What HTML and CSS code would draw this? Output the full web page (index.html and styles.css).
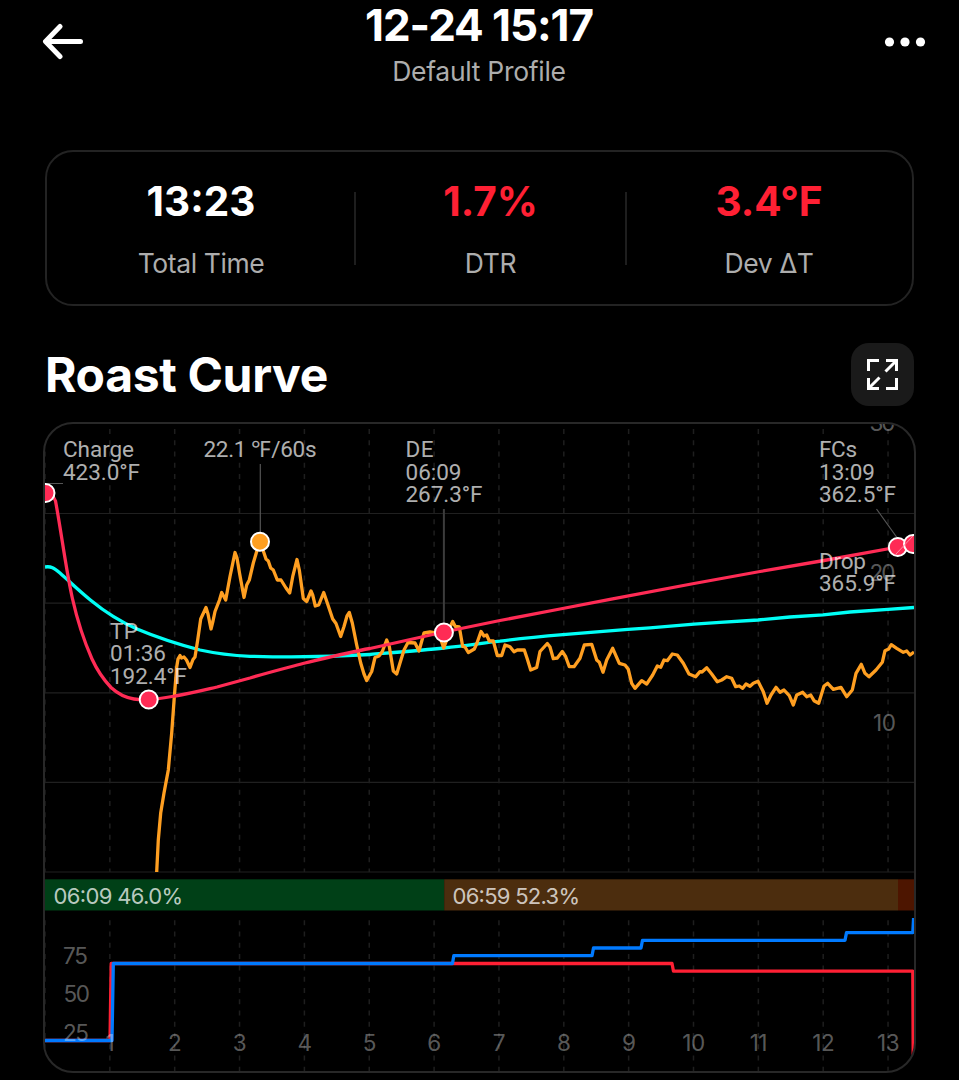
FILE: index.html
```html
<!DOCTYPE html>
<html lang="en">
<head>
  <meta charset="UTF-8">
  <title>Roast Detail</title>
  <meta name="viewport" content="width=device-width, initial-scale=1.0">
  <link rel="stylesheet" href="styles.css">
</head>
<body>

  <header class="top-bar">
    <a class="back" href="#" title="Back">
      <svg width="42" height="38" viewBox="0 0 42 38">
        <path d="M18 4.500 L3.500 19.500 L18 34.500 M4 19.500 H38.500"/>
      </svg>
    </a>
    <div class="heading">
      <h1>12-24 15:17</h1>
      <p>Default Profile</p>
    </div>
    <a class="more" href="#" title="More">
      <svg width="42" height="12" viewBox="0 0 42 12">
        <circle cx="5.500" cy="6" r="4.600"/>
        <circle cx="21" cy="6" r="4.600"/>
        <circle cx="36.500" cy="6" r="4.600"/>
      </svg>
    </a>
  </header>

  <section class="stats">
    <div class="stat">
      <strong>13:23</strong>
      <span>Total Time</span>
    </div>
    <div class="stat warn">
      <strong>1.7%</strong>
      <span>DTR</span>
    </div>
    <div class="stat warn">
      <strong>3.4°F</strong>
      <span>Dev ΔT</span>
    </div>
  </section>

  <div class="section-head">
    <h2>Roast Curve</h2>
    <button class="expand" title="Full screen">
      <svg width="33" height="33" viewBox="0 0 33 33">
        <path d="M2.500 13 V2.500 H13 M20 2.500 H30.500 V13 M30.500 20 V30.500 H20 M13 30.500 H2.500 V20 M19.500 13.500 L30 3 M13.500 19.500 L3 30"/>
      </svg>
    </button>
  </div>

  <div class="chart">
    <svg id="chart" width="869" height="648" viewBox="45 424 869 648">
      <g id="grid"></g>

      <g class="axis">
        <text x="869.500" y="431" textLength="26">30</text>
        <text x="869.500" y="580.500" textLength="26">20</text>
        <text x="873" y="730.500" textLength="23">10</text>
      </g>

      <path class="line cyan" d="M45 567 C51 566 54 568 60 573 C68 580 78 590 91 600.500 C105 612 119 621 137 629 C156 637 177 644 200 650 C216 653.500 232 655.500 250 656.300 C280 657.200 330 657 370 654.500 C400 652 425 650 444 648 C470 645 485 642.800 500 641.200 C520 638.500 540 636.500 563 634.600 L600 631.600 L628 629.300 L650 627.800 L694 624.200 L720 622.300 L758 620 L790 617 L823 614.800 L850 612 L888 609.300 L914 607.500"/>
      <polyline class="line orange" points="156.700,872 158.300,840 160.700,813 164,793 168.300,770 171.700,733 174.300,697 176.700,667 178,659 180,655.500 181.500,658 184,657 186.500,660 190,667.500 193,659.500 195,657 197.700,640 200.700,619 203,614 206,607.500 208,614 211,629 213,621 215,611.500 219.500,600 221.700,592.500 225.700,600 230,576.500 235,552.500 237,558 239.500,573 244,597.500 246.700,585 249.300,580 253.300,563 256.700,551.500 260,541.500 264,553 266,559 268.300,561 270.700,568 273.300,570 277.300,580 281,580 286,588 289.700,593 292.700,576.700 297,559.500 299.300,570 303.300,598.500 306.700,601.500 311,591 312.700,595 315.300,606 318.700,605 323.700,592.500 327.300,603 332.700,619 336,623.500 340.700,636.500 344,626.500 347,616 349.300,612.500 352.300,623 356.700,645 360.700,663 364,674 366.700,680.500 371.700,671.500 375,657.500 379,656 382.300,651.500 386.700,640 389.300,646.500 393.300,671 396.700,674 400,663 404,650 408,642.500 415,643 419,651 424,633 430,632 436,633 440,637 443.700,648 446.700,640 449,629 452.700,621.500 455.300,626.500 459.300,627 462.700,646.500 465,647 468.300,652.500 474.300,649 477,643 481,631.500 484,636 486.700,635 489.300,641 493.300,641 497.300,655.500 501.700,655.500 505,645 510,646.700 514,651.700 517.300,650 524.300,650 527.300,659 530.700,670 536.700,667.500 540,651.500 547.300,643.500 550,647 553.300,658.700 557.300,658 562.300,651.500 565.700,656.700 569.300,666.700 574,666.700 580,658.300 584.300,645 591.700,644.300 596.700,660 599.300,662.300 603,672.300 606.700,660 612.700,648.300 619.300,663.300 625,665 628.300,669.300 631.700,683.300 635,688.300 641.700,680.700 646.700,684 652.700,675 657.300,666 660.700,667.300 664,660 667.300,660.700 672.300,654 677.300,655 683.300,663.300 689,674 695.700,676.700 700,671.700 702,672 706.700,667.700 711.700,674 717.300,681.700 721.700,680 726.700,676.700 731.700,678.300 735.700,686.700 739.300,686 742.700,688.300 746,684 750,686.300 753.300,683.300 758,681.300 763.300,691.700 767,703.300 771,695 776,687.300 780,692.300 784,690 789.300,695.700 793.300,705 796.700,695 802.700,692.300 806.700,696.700 810.700,695 814,700.700 818.700,703.300 824,686 827.700,683.300 833.300,689.300 841,687.300 846.700,696.700 852.300,690 856,673.300 861.300,664.300 865,673.300 869,676.700 876,670 882.300,662.300 885,650.700 888.700,649 891.300,644.700 896.700,648.300 903.300,652.300 906.700,651 910,655 914,652"/>
      <path class="line red" d="M45 493 C51 493 53.500 496 55.500 501 C61 530 66 570 72.300 598 C77 619 84 641 92 659 C97 670 104 680 111 687.500 C118 694 125 697.500 134 699 C140 699.900 155 699.900 175 696 C190 693.500 204 690 217 687 L250 678 C270 672 290 667 305 663 C330 657 350 652 370 648.500 L444 632 L500 620.500 L560 609 L610 599.300 L694 583.500 L760 571.500 L824 560.500 L898 547 L914 544"/>

      <!-- event callouts -->
      <g class="lead">
        <path d="M45 483.500 H63"/>
        <path d="M260.300 464 V541"/>
        <path class="thick" d="M443.900 509 V632"/>
        <path d="M876.500 509 L898 539"/>
      </g>
      <g class="marker">
        <circle cx="45.500" cy="493" r="9"/>
        <circle cx="148.700" cy="699.500" r="9"/>
        <circle class="peak" cx="260" cy="541.700" r="9"/>
        <circle cx="443.900" cy="632.500" r="9"/>
        <circle cx="897.800" cy="547" r="9"/>
        <circle cx="913" cy="544" r="9"/>
      </g>
      <path class="drop-lead" d="M895.500 554.500 L913 536"/>
      <g class="note">
        <text x="63" y="457" textLength="71">Charge</text>
        <text x="63" y="480" textLength="77">423.0°F</text>
        <text x="203.500" y="457" textLength="113">22.1 ℉/60s</text>
        <text x="405.500" y="457" textLength="28">DE</text>
        <text x="405.500" y="480" textLength="56">06:09</text>
        <text x="405.500" y="502" textLength="77">267.3°F</text>
        <text x="819" y="457" textLength="38">FCs</text>
        <text x="819" y="480" textLength="56">13:09</text>
        <text x="819" y="502" textLength="77">362.5°F</text>
        <text x="819" y="569" textLength="47">Drop</text>
        <text x="819" y="591" textLength="77">365.9°F</text>
        <text x="110" y="639" textLength="28">TP</text>
        <text x="110" y="661" textLength="56">01:36</text>
        <text x="110" y="684" textLength="77">192.4°F</text>
      </g>

      <!-- roast phases -->
      <rect class="drying" x="45" y="879.300" width="399.200" height="31.200"/>
      <rect class="maillard" x="444.200" y="879.300" width="453.800" height="31.200"/>
      <rect class="develop" x="898" y="879.300" width="16" height="31.200"/>
      <g class="phase">
        <text x="53.500" y="904" textLength="129.500">06:09 46.0%</text>
        <text x="452.500" y="904" textLength="127.500">06:59 52.3%</text>
      </g>

      <!-- heat and fan -->
      <path class="line heat" d="M45 1040.500 H110 L111.200 963.500 H672 L673.500 971.200 H912.800 L913.200 1056"/>
      <path class="line fan" d="M45 1040.500 H112 L113.300 963.500 H452.500 L453.800 955.700 H592 L593.500 948 H641 L642.500 940.300 H845 L846.500 932.600 H912.800 L913.600 918"/>
      <g class="axis">
        <text x="63" y="963.500" textLength="25">75</text>
        <text x="63.500" y="1001.500" textLength="26.500">50</text>
        <text x="63" y="1040.500" textLength="26">25</text>
      </g>
      <g class="axis minutes" id="minutes"></g>
    </svg>
  </div>

  <script>
    const LEFT = 45;
    const STEP = 64.85;
    let grid = "";
    let minutes = "";

    [513.5, 603.2, 692.8, 782.4, 872].forEach(y => {
      grid += `<path class="row" d="M45 ${y} H914"/>`;
    });

    for (let i = 0; i <= 13; i++) {
      const x = LEFT + i * STEP;
      grid += `<path class="col" d="M${x} 429 V872 M${x} 920.3 V1071"/>`;
      if (i > 0) minutes += `<text x="${x}" y="1050.500">${i}</text>`;
    }

    document.getElementById("grid").innerHTML = grid;
    document.getElementById("minutes").innerHTML = minutes;
  </script>

</body>
</html>
```
FILE: styles.css
```css
* {
  box-sizing: border-box;
}
body {
  margin: 0;
  height: 1080px;
  overflow: hidden;
  background: #000;
  color: #fff;
  font-family: Inter, "Noto Sans", sans-serif;
}
h1, h2, p {
  margin: 0;
}
svg {
  display: block;
}
.top-bar {
  display: flex;
  justify-content: space-between;
  height: 150px;
  padding: 0 33px 0 42px;
}
.back {
  width: 42px;
  padding-top: 22px;
}
.back path {
  fill: none;
  stroke: #fff;
  stroke-width: 5;
  stroke-linecap: round;
  stroke-linejoin: round;
}
.more {
  padding-top: 36px;
}
.more circle {
  fill: #fff;
}
.heading {
  text-align: center;
  padding-right: 10px;
}
.heading h1 {
  font-size: 44px;
  line-height: 50px;
  font-weight: 700;
  letter-spacing: -1.1px;
}
.heading p {
  margin-top: 3px;
  font-size: 26.5px;
  line-height: 36px;
  font-weight: 400;
  letter-spacing: -0.3px;
  color: #adadad;
}
.stats {
  display: grid;
  grid-template-columns: 308px 271px 1fr;
  width: 869px;
  height: 156px;
  margin-left: 45px;
  padding-top: 28px;
  border: 2px solid #232323;
  border-radius: 28px;
}
.stat {
  position: relative;
  text-align: center;
}
.stat + .stat::before {
  content: "";
  position: absolute;
  left: -1px;
  top: 12px;
  width: 2px;
  height: 73px;
  background: #1e1e1e;
}
.stat strong {
  display: block;
  font-size: 40.5px;
  line-height: 44px;
  font-weight: 700;
}
.stat span {
  display: block;
  margin-top: 22px;
  font-size: 26.5px;
  line-height: 34px;
  font-weight: 400;
  letter-spacing: -0.4px;
  color: #adadad;
}
.stat.warn strong {
  color: #ff2034;
}
.section-head {
  display: flex;
  align-items: center;
  justify-content: space-between;
  height: 63px;
  margin: 37px 45px 0;
}
.section-head h2 {
  font-size: 48px;
  line-height: 60px;
  font-weight: 700;
  letter-spacing: -0.35px;
}
.expand {
  display: flex;
  align-items: center;
  justify-content: center;
  width: 63px;
  height: 63px;
  padding: 0;
  border: none;
  border-radius: 18px;
  background: #1a1a1a;
}
.expand path {
  fill: none;
  stroke: #fff;
  stroke-width: 3;
}
.chart {
  width: 873px;
  height: 651px;
  margin: 16px 0 0 43px;
  border: 2px solid #282828;
  border-radius: 30px;
  overflow: hidden;
}
.row {
  stroke: #202020;
  stroke-width: 1.2;
}
.col {
  stroke: #1e1e1e;
  stroke-width: 1.5;
  stroke-dasharray: 5 6.27;
}
.line {
  fill: none;
  stroke-width: 3.3;
  stroke-linejoin: round;
}
.cyan {
  stroke: #00fff6;
}
.orange {
  stroke: #ff9f21;
}
.red {
  stroke: #ff2b55;
}
.heat {
  stroke: #ff2034;
}
.fan {
  stroke: #007aff;
}
.lead path {
  stroke: #555;
  stroke-width: 1.2;
}
.lead .thick {
  stroke: #3c3c3c;
  stroke-width: 2;
}
.drop-lead {
  stroke: #ff8ba3;
  stroke-width: 1;
}
.marker circle {
  fill: #ff2b55;
  stroke: #fff;
  stroke-width: 2;
}
.marker .peak {
  fill: #ff9f21;
}
.note text {
  font-family: Roboto, sans-serif;
  font-size: 22.5px;
  fill: #fff;
  fill-opacity: 0.7;
}
.axis text {
  font-size: 22.5px;
  font-weight: 400;
  fill: #fff;
  fill-opacity: 0.36;
}
.minutes text {
  text-anchor: middle;
  letter-spacing: -0.5px;
}
.phase text {
  font-size: 22px;
  font-weight: 400;
  fill: #fff;
  fill-opacity: 0.74;
}
.drying {
  fill: #004017;
}
.maillard {
  fill: #4c2d0e;
}
.develop {
  fill: #4d1500;
}
```
